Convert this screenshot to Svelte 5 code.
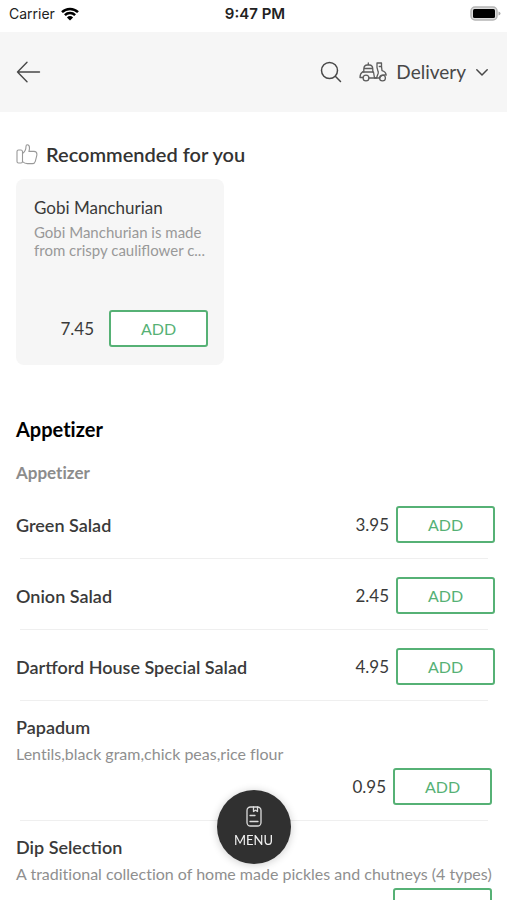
<script lang="ts">
	type Dish = { name: string; price: string; description?: string };

	const recommended: Dish[] = [
		{ name: 'Gobi Manchurian', price: '7.45', description: 'Gobi Manchurian is made from crispy cauliflower c...' },
	];

	const appetizers: Dish[] = [
		{ name: 'Green Salad', price: '3.95' },
		{ name: 'Onion Salad', price: '2.45' },
		{ name: 'Dartford House Special Salad', price: '4.95' },
		{ name: 'Papadum', price: '0.95', description: 'Lentils,black gram,chick peas,rice flour' },
		{ name: 'Dip Selection', price: '', description: 'A traditional collection of home made pickles and chutneys (4 types)' },
	];

	let basket: Dish[] = $state([]);

	function add(dish: Dish) {
		basket.push(dish);
	}
</script>

<div class="screen">
	<div class="status">
		<div class="carrier">
			Carrier
			<svg width="18" height="14" viewBox="0 0 18 14" aria-hidden="true">
				<g fill="none" stroke="#000" stroke-width="2.5">
					<path d="M1 5.2a11.4 11.4 0 0 1 16 0" />
					<path d="M3.9 8.2a7.2 7.2 0 0 1 10.2 0" />
				</g>
				<path d="M9 13.6l-3.1-3.1a4.5 4.5 0 0 1 6.2 0z" />
			</svg>
		</div>
		<div class="time">9:47 PM</div>
		<svg class="battery" width="31" height="16" viewBox="0 0 31 16" aria-hidden="true">
			<rect x="1" y="1" width="26" height="13" rx="4" fill="#ddd" stroke="#b5b5b5" stroke-width="1.5" />
			<rect x="3" y="3" width="22" height="9" rx="1.5" />
			<path d="M28.5 5.5q2 .5 2 2t-2 2z" fill="#aaa" />
		</svg>
	</div>

	<header>
		<button class="icon" aria-label="Back">
			<svg width="25" height="22" viewBox="0 0 25 22" fill="none" stroke="#484848" stroke-width="1.4" stroke-linecap="round" stroke-linejoin="round">
				<path d="M23.5 11H1.5M11 1.2L1.5 11 11 20.8" />
			</svg>
		</button>
		<div class="tools">
			<button class="icon" aria-label="Search">
				<svg width="22" height="22" viewBox="0 0 22 22" fill="none" stroke="#484848" stroke-width="1.5" stroke-linecap="round">
					<circle cx="9.5" cy="9.5" r="8" />
					<path d="M15.3 15.3l5.2 5.2" />
				</svg>
			</button>
			<button class="mode">
				<svg width="28" height="20" viewBox="0 0 28 20" fill="none" stroke="#5c5c5c" stroke-width="1.3" stroke-linejoin="round" stroke-linecap="round" aria-hidden="true">
					<path d="M4.800 10V7Q5 3 8.200 3h2.200q3.200 0 3.400 4v3M9.300 3V1M4.800 6.500h9" />
					<path d="M3.500 10h11l1 6h2l1.700-4.800q.2-1-.2-1.900L18 5.500V1h4.500v3.500h-2.200" />
					<path d="M22.500 4.500l.5 4.200q3.600.9 4.200 4.300-5-.5-6.400 3H10M3.500 10Q1 11.500 1 15.500h2.800" />
					<circle cx="7" cy="16" r="2.900" />
					<circle cx="23.500" cy="16" r="2.900" />
				</svg>
				<span>Delivery</span>
				<svg width="14" height="9" viewBox="0 0 14 9" fill="none" stroke="#484848" stroke-width="1.5" stroke-linecap="round" stroke-linejoin="round" aria-hidden="true">
					<path d="M1.8 1.8L7 7l5.2-5.2" />
				</svg>
			</button>
		</div>
	</header>

	<main>
		<section class="recommended">
			<h2>
				<svg width="22" height="21" viewBox="0 0 22 21" fill="none" stroke="#999" stroke-width="1.1" stroke-linejoin="round" aria-hidden="true">
					<path d="M6.500 7.500Q6.200 6 5 6H2.500Q1 6 1 7.500v10Q1 19 2.500 19H5q1.500 0 1.500-1.500z" />
					<path d="M6.500 9.500Q10 7 10 2.600 10 .8 11.300.8q2.200 0 2.200 3.200 0 1.600-.6 3.400H18q2.900.1 2.900 2.800 0 1-.4 2.500l-1.200 4.600q-.7 2.300-2.900 2.300h-5q-2.600 0-4.900-2" />
				</svg>
				Recommended for you
			</h2>
			{#each recommended as dish}
				<article class="card">
					<h3>{dish.name}</h3>
					<p>{dish.description}</p>
					<div class="buy">
						<span class="price">{dish.price}</span>
						<button class="add" onclick={() => add(dish)}>ADD</button>
					</div>
				</article>
			{/each}
		</section>

		<section class="list">
			<h2>Appetizer</h2>
			<h3>Appetizer</h3>
			<ul>
				{#each appetizers as dish}
					<li class:detailed={dish.description}>
						<div class="dish">
							<h4>{dish.name}</h4>
							{#if dish.description}
								<p>{dish.description}</p>
							{/if}
						</div>
						<div class="buy">
							<span class="price">{dish.price}</span>
							<button class="add" onclick={() => add(dish)}>ADD</button>
						</div>
					</li>
				{/each}
			</ul>
		</section>
	</main>

	<button class="menu">
		<svg width="16" height="22" viewBox="0 0 16 22" fill="none" stroke="#ddd" stroke-width="1.3" stroke-linecap="round" stroke-linejoin="round" aria-hidden="true">
			<rect x="1" y="1" width="14" height="19" rx="3.5" />
			<path d="M7.5 1v4.500l2-1.300 2 1.300V1M4 9.500h5M4 15.500h8" />
		</svg>
		MENU
	</button>
</div>

<style>
	:global(body) {
		margin: 0;
		background: #fff;
	}

	.screen {
		display: flex;
		flex-direction: column;
		height: 100vh;
		font-family: Lato, "Liberation Sans", sans-serif;
		color: #3a3a3a;
	}

	h2, h3, h4, p, ul {
		margin: 0;
		padding: 0;
	}

	button {
		font-family: inherit;
		cursor: pointer;
	}

	.status {
		display: grid;
		grid-template-columns: 1fr auto 1fr;
		align-items: center;
		flex: none;
		height: 28px;
		padding: 0 6px 4px 9px;
		font-family: Inter, "Liberation Sans", sans-serif;
		font-size: 14px;
		line-height: 16px;
		color: #222;
	}

	.carrier {
		display: flex;
		align-items: center;
		gap: 6px;
	}

	.time {
		font-size: 15px;
		font-weight: 600;
	}

	.battery {
		justify-self: end;
	}

	header {
		display: flex;
		align-items: center;
		justify-content: space-between;
		flex: none;
		height: 80px;
		padding: 0 18px 0 16px;
		background: #f6f6f6;
	}

	.tools {
		display: flex;
		align-items: center;
		gap: 17px;
	}

	.icon, .mode {
		display: flex;
		align-items: center;
		padding: 0;
		border: 0;
		background: none;
	}

	.mode {
		gap: 9px;
		font-size: 19px;
		line-height: 24px;
		color: #484848;
	}

	main {
		flex: 1;
		min-height: 0;
		overflow-y: auto;
		scrollbar-width: none;
	}

	.recommended {
		padding: 30px 16px 0;
	}

	.recommended h2 {
		display: flex;
		align-items: center;
		gap: 8px;
		font-size: 20px;
		font-weight: 600;
		line-height: 24px;
		color: #333;
	}

	.card {
		display: flex;
		flex-direction: column;
		box-sizing: border-box;
		width: 208px;
		height: 186px;
		margin-top: 13px;
		padding: 17px 16px 18px 18px;
		border-radius: 8px;
		background: #f6f6f6;
	}

	.card h3 {
		font-size: 17px;
		font-weight: 400;
		line-height: 24px;
	}

	.card p {
		margin-top: 3px;
		font-size: 15px;
		line-height: 18px;
		color: #999;
	}

	.buy {
		display: flex;
		align-items: center;
		justify-content: flex-end;
		gap: 7px;
	}

	.card .buy {
		gap: 15px;
		margin-top: auto;
	}

	.price {
		font-size: 17px;
		line-height: 24px;
	}

	.add {
		box-sizing: border-box;
		width: 99px;
		height: 37px;
		padding: 0;
		border: 2px solid #56b175;
		border-radius: 3px;
		background: #fff;
		font-size: 16px;
		color: #56b175;
	}

	.list {
		padding: 52px 12px 0 16px;
	}

	.list h2, .list h3 {
		font-weight: 700;
		line-height: 24px;
		font-variant-ligatures: none;
	}

	.list h2 {
		font-size: 20px;
		color: #000;
	}

	.list h3 {
		margin-top: 20px;
		font-size: 17px;
		color: #8c8c8c;
	}

	ul {
		margin-top: 3px;
		list-style: none;
	}

	li {
		display: flex;
		flex-wrap: wrap;
		align-items: center;
		justify-content: space-between;
		padding-top: 18px;
	}

	/* divider, inset from both sides of the row */
	li::after {
		content: "";
		width: 100%;
		height: 1px;
		margin: 15px 7px 0 4px;
		background: #efefef;
	}

	li.detailed {
		padding-top: 14px;
	}

	.detailed .dish, .detailed .buy {
		width: 100%;
	}

	.detailed .buy {
		box-sizing: border-box;
		margin-top: 2px;
		padding-right: 3px;
	}

	h4 {
		font-size: 18px;
		font-weight: 600;
		line-height: 24px;
	}

	.dish p {
		margin-top: 3px;
		font-size: 16px;
		line-height: 24px;
		font-variant-ligatures: none;
		color: #8f8f8f;
	}

	.menu {
		position: fixed;
		bottom: 36px;
		left: 50%;
		display: flex;
		flex-direction: column;
		align-items: center;
		justify-content: center;
		gap: 4px;
		width: 74px;
		height: 74px;
		padding: 0;
		border: 0;
		border-radius: 50%;
		background: #303030;
		box-shadow: 0 1px 8px rgba(0, 0, 0, 0.2);
		font-size: 13px;
		line-height: 16px;
		color: #f2f2f2;
		transform: translateX(-50%);
	}
</style>
